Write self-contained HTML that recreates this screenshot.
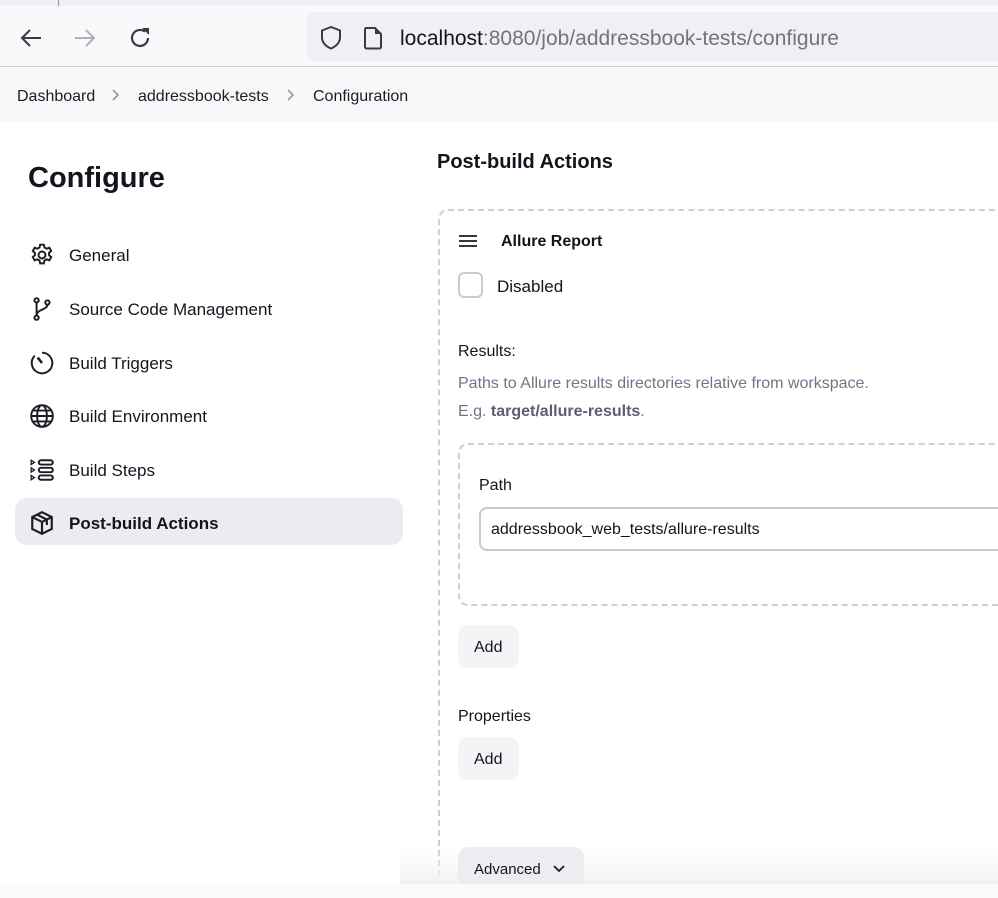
<!DOCTYPE html>
<html style="width:998px;height:898px;overflow:hidden"><head><meta charset="utf-8"><style>
*{box-sizing:border-box;margin:0;padding:0}
body{width:998px;height:898px;overflow:hidden;background:#fff;font-family:"Liberation Sans",sans-serif;color:#14141f;position:relative}
.abs{position:absolute}
.t{position:absolute;white-space:nowrap}
</style></head><body>
<div class="abs" style="left:0;top:0;width:998px;height:6px;background:#f0f0f4"></div>
<div class="abs" style="left:58px;top:0;width:1px;height:6px;background:#999"></div>
<div class="abs" style="left:0;top:6px;width:998px;height:60px;background:#f9f9fb"></div>
<div class="abs" style="left:0;top:66px;width:998px;height:1px;background:#cfcfd8"></div>
<svg class="abs" style="left:18px;top:25px" width="26" height="26" viewBox="0 0 26 26"><path d="M23 13H4M12 5L4 13l8 8" fill="none" stroke="#3a3a44" stroke-width="2"/></svg>
<svg class="abs" style="left:72px;top:25px" width="26" height="26" viewBox="0 0 26 26"><path d="M3 13h19M14 5l8 8-8 8" fill="none" stroke="#b0b0b8" stroke-width="2"/></svg>
<svg class="abs" style="left:126px;top:24px" width="28" height="28" viewBox="0 0 28 28"><path d="M22 14a8 8 0 1 1-3-6.3" fill="none" stroke="#3a3a44" stroke-width="2.2"/><path d="M16 4h7v7z" fill="#3a3a44"/></svg>
<div class="abs" style="left:307px;top:12px;width:700px;height:50px;background:#f0f0f4;border-radius:8px"></div>
<svg class="abs" style="left:319px;top:25px" width="24" height="26" viewBox="0 0 24 26"><path d="M12 2L3 5.5v7c0 5 4 9 9 11 5-2 9-6 9-11v-7z" fill="none" stroke="#3a3a44" stroke-width="2"/></svg>
<svg class="abs" style="left:362px;top:25px" width="22" height="26" viewBox="0 0 22 26"><path d="M4 3h9l6 6v13a1.5 1.5 0 0 1-1.5 1.5h-13A1.5 1.5 0 0 1 3 22V4.5A1.5 1.5 0 0 1 4 3z" fill="none" stroke="#3a3a44" stroke-width="2"/><path d="M13 3v6h6" fill="#3a3a44"/></svg>
<div class="t" style="left:400px;top:27px;font-size:21px;color:#15141a">localhost<span style="color:#737380">:8080/job/addressbook-tests/configure</span></div>
<div class="abs" style="left:0;top:67px;width:998px;height:55px;background:#f8f8fa"></div>
<div class="t" style="left:17px;top:88px;font-size:16px;color:#1c1c24">Dashboard</div>
<svg class="abs" style="left:111px;top:88px" width="10" height="14" viewBox="0 0 10 14"><path d="M2 2l5 5-5 5" fill="none" stroke="#999" stroke-width="1.6"/></svg>
<div class="t" style="left:138px;top:88px;font-size:16px;color:#1c1c24">addressbook-tests</div>
<svg class="abs" style="left:286px;top:88px" width="10" height="14" viewBox="0 0 10 14"><path d="M2 2l5 5-5 5" fill="none" stroke="#999" stroke-width="1.6"/></svg>
<div class="t" style="left:313px;top:88px;font-size:16px;color:#1c1c24">Configuration</div>
<div class="t" style="left:28px;top:162px;font-size:29px;font-weight:bold">Configure</div>
<div class="abs" style="left:15px;top:498px;width:388px;height:47px;background:#ebebf0;border-radius:12px"></div>
<svg class="abs" style="left:29px;top:242px" width="26" height="26" viewBox="0 0 24 24" fill="none" stroke="#1c1c24" stroke-width="1.8"><circle cx="12" cy="12" r="3.2"/><path d="M10.3 2.5h3.4l.6 2.6 2 1.1 2.5-.9 1.7 3-2 1.7v2.2l2 1.7-1.7 3-2.5-.9-2 1.1-.6 2.6h-3.4l-.6-2.6-2-1.1-2.5.9-1.7-3 2-1.7v-2.2l-2-1.7 1.7-3 2.5.9 2-1.1z"/></svg>
<div class="t" style="left:69px;top:246px;font-size:17px">General</div>
<svg class="abs" style="left:29px;top:296px" width="26" height="26" viewBox="0 0 24 24" fill="none" stroke="#1c1c24" stroke-width="1.8"><circle cx="7" cy="4" r="2"/><circle cx="7" cy="20" r="2"/><circle cx="17" cy="6" r="2"/><path d="M7 6v12M17 8c0 5-10 4-10 10"/></svg>
<div class="t" style="left:69px;top:300px;font-size:17px">Source Code Management</div>
<svg class="abs" style="left:29px;top:350px" width="26" height="26" viewBox="0 0 24 24" fill="none" stroke="#1c1c24" stroke-width="1.8"><path d="M12 2.5a9.5 9.5 0 1 1-6.7 2.8"/><path d="M12 12L8 7" stroke-width="2.4"/></svg>
<div class="t" style="left:69px;top:354px;font-size:17px">Build Triggers</div>
<svg class="abs" style="left:29px;top:403px" width="26" height="26" viewBox="0 0 24 24" fill="none" stroke="#1c1c24" stroke-width="1.8"><circle cx="12" cy="12" r="10"/><ellipse cx="12" cy="12" rx="4.5" ry="10"/><path d="M2 12h20M4 7h16M4 17h16"/></svg>
<div class="t" style="left:69px;top:407px;font-size:17px">Build Environment</div>
<svg class="abs" style="left:29px;top:457px" width="26" height="26" viewBox="0 0 24 24" fill="none" stroke="#1c1c24" stroke-width="1.8"><path d="M2 3l3 2-3 2zM2 10l3 2-3 2zM2 17l3 2-3 2z" stroke-width="1.2"/><rect x="9" y="3" width="13" height="4" rx="2"/><rect x="9" y="10" width="13" height="4" rx="2"/><rect x="9" y="17" width="13" height="4" rx="2"/></svg>
<div class="t" style="left:69px;top:461px;font-size:17px">Build Steps</div>
<svg class="abs" style="left:29px;top:510px" width="26" height="26" viewBox="0 0 24 24" fill="none" stroke="#1c1c24" stroke-width="2"><path d="M12 2l9 4.5v11L12 22l-9-4.5v-11z"/><path d="M3 6.5L12 11l9-4.5M12 11v11M7.5 4.3l9 4.5v5"/></svg>
<div class="t" style="left:69px;top:514px;font-size:17px;font-weight:bold">Post-build Actions</div>
<div class="t" style="left:437px;top:151px;font-size:20px;font-weight:bold">Post-build Actions</div>
<div class="abs" style="left:438px;top:209px;width:600px;height:689px;border:2px dashed #ccd0d4;border-bottom:none;border-radius:10px 10px 0 0"></div>
<svg class="abs" style="left:458px;top:234px" width="20" height="14" viewBox="0 0 20 14"><path d="M1 2h18M1 7h18M1 12h18" stroke="#1c1c24" stroke-width="1.8"/></svg>
<div class="t" style="left:501px;top:233px;font-size:16px;font-weight:bold">Allure Report</div>
<div class="abs" style="left:458px;top:272px;width:25px;height:26px;border:2px solid #c8ccd0;border-radius:6px"></div>
<div class="t" style="left:497px;top:277px;font-size:17px">Disabled</div>
<div class="t" style="left:458px;top:343px;font-size:16px">Results:</div>
<div class="t" style="left:458px;top:375px;font-size:16px;color:#737388">Paths to Allure results directories relative from workspace.</div>
<div class="t" style="left:458px;top:403px;font-size:16px;color:#737388">E.g. <b style="color:#5e5e70">target/allure-results</b>.</div>
<div class="abs" style="left:458px;top:443px;width:600px;height:163px;border:2px dashed #ccd0d4;border-radius:10px"></div>
<div class="t" style="left:479px;top:477px;font-size:16px">Path</div>
<div class="abs" style="left:479px;top:507px;width:560px;height:44px;border:2px solid #c8ccd0;border-radius:8px"></div>
<div class="t" style="left:491px;top:521px;font-size:16px">addressbook_web_tests/allure-results</div>
<div class="abs" style="left:458px;top:625px;width:61px;height:43px;background:#f4f4f6;border-radius:10px"></div>
<div class="t" style="left:474px;top:639px;font-size:16px">Add</div>
<div class="t" style="left:458px;top:708px;font-size:16px">Properties</div>
<div class="abs" style="left:458px;top:737px;width:61px;height:43px;background:#f4f4f6;border-radius:10px"></div>
<div class="t" style="left:474px;top:751px;font-size:16px">Add</div>
<div class="abs" style="left:400px;top:850px;width:598px;height:34px;background:linear-gradient(rgba(255,255,255,0),#f2f2f4)"></div>
<div class="abs" style="left:458px;top:847px;width:126px;height:40px;background:#ededf1;border-radius:10px"></div>
<div class="t" style="left:474px;top:861px;font-size:15px">Advanced</div>
<svg class="abs" style="left:553px;top:865px" width="12" height="8" viewBox="0 0 12 8"><path d="M1 1l5 5 5-5" fill="none" stroke="#1c1c24" stroke-width="1.8"/></svg>
<div class="abs" style="left:0;top:884px;width:998px;height:14px;background:#fafafa"></div>
</body></html>
